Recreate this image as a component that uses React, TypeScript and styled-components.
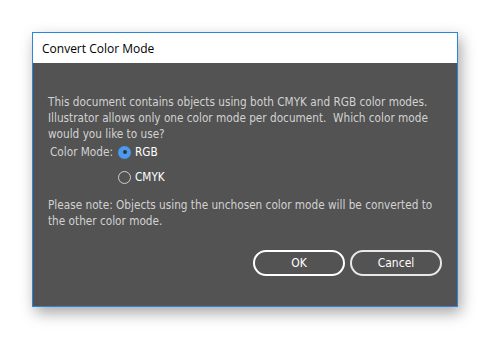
import React, { useState } from 'react';
import styled, { createGlobalStyle } from 'styled-components';

const GlobalStyle = createGlobalStyle`
  html, body {
    margin: 0;
    padding: 0;
    background: #ffffff;
  }
`;

type Mode = 'RGB' | 'CMYK';

export default function App() {
  const [mode, setMode] = useState<Mode>('RGB');

  return (
    <>
      <GlobalStyle />
      <Page>
        <Dialog>
          <TitleBar>Convert Color Mode</TitleBar>
          <Body>
            <Paragraph>
              This document contains objects using both CMYK and RGB color modes.
              <br />
              Illustrator allows only one color mode per document.&nbsp; Which color mode
              <br />
              would you like to use?
            </Paragraph>
            <ModeGrid>
              <ModeLabel>Color Mode:</ModeLabel>
              <RadioRow onClick={() => setMode('RGB')}>
                <Radio Checked={mode === 'RGB'} />
                RGB
              </RadioRow>
              <span />
              <RadioRow onClick={() => setMode('CMYK')}>
                <Radio Checked={mode === 'CMYK'} />
                CMYK
              </RadioRow>
            </ModeGrid>
            <Paragraph>
              Please note: Objects using the unchosen color mode will be converted to
              <br />
              the other color mode.
            </Paragraph>
            <Buttons>
              <Button>OK</Button>
              <Button>Cancel</Button>
            </Buttons>
          </Body>
        </Dialog>
      </Page>
    </>
  );
}

const Page = styled.div`
  width: 490px;
  height: 339px;
  box-sizing: border-box;
  padding: 32px 0 0 32px;
  background: #ffffff;
  overflow: hidden;
`;

const Dialog = styled.div`
  width: 426px;
  height: 275px;
  box-sizing: border-box;
  border: 1px solid #2b86d9;
  background: #535353;
  display: flex;
  flex-direction: column;
  box-shadow: 3px 6px 14px rgba(0, 0, 0, 0.35);
`;

const TitleBar = styled.div`
  height: 30px;
  flex: 0 0 auto;
  background: #ffffff;
  color: #000000;
  font-family: 'Open Sans', 'Noto Sans', sans-serif;
  font-size: 12px;
  display: flex;
  align-items: center;
  padding-left: 9px;
`;

const Body = styled.div`
  flex: 1;
  padding: 31px 15px 0 15px;
  color: #d2d2d2;
  font-family: 'DejaVu Sans Condensed', 'DejaVu Sans', sans-serif;
  font-size: 11.7px;
  display: flex;
  flex-direction: column;
`;

const Paragraph = styled.p`
  margin: 0;
  line-height: 16px;
  white-space: nowrap;
`;

const ModeGrid = styled.div`
  display: grid;
  grid-template-columns: auto auto;
  justify-content: start;
  column-gap: 5px;
  row-gap: 11px;
  margin: 3px 0 13px 2px;
  align-items: center;
`;

const ModeLabel = styled.span``;

const RadioRow = styled.label`
  display: flex;
  align-items: center;
  gap: 4px;
  color: #ffffff;
  cursor: pointer;
`;

const Radio = styled.span<{ Checked: boolean }>`
  width: 13px;
  height: 13px;
  box-sizing: border-box;
  border-radius: 50%;
  position: relative;
  border: ${({ Checked }) => (Checked ? 'none' : '1.5px solid #cfcfcf')};
  background: ${({ Checked }) => (Checked ? '#4a9af0' : 'transparent')};
  &::after {
    content: '';
    display: ${({ Checked }) => (Checked ? 'block' : 'none')};
    position: absolute;
    left: 4.5px;
    top: 4.5px;
    width: 4px;
    height: 4px;
    border-radius: 50%;
    background: #333333;
  }
`;

const Buttons = styled.div`
  display: flex;
  justify-content: flex-end;
  gap: 5px;
  margin-top: auto;
  margin-bottom: 30px;
`;

const Button = styled.button`
  width: 92px;
  height: 26px;
  box-sizing: border-box;
  border: 2px solid #e8e8e8;
  border-radius: 13px;
  background: transparent;
  color: #ffffff;
  font-family: 'DejaVu Sans Condensed', 'DejaVu Sans', sans-serif;
  font-size: 12px;
  cursor: pointer;
  &:first-child {
    border-color: #ffffff;
  }
`;
